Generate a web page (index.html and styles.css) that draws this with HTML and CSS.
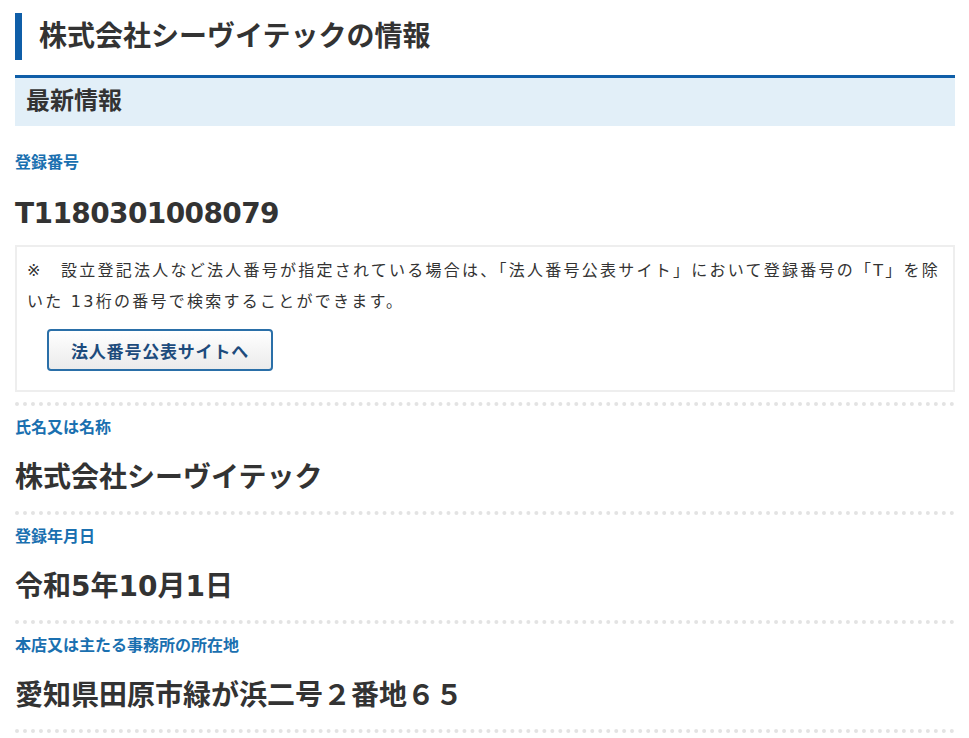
FILE: index.html
```html
<!DOCTYPE html>
<html lang="ja">
<head>
<meta charset="utf-8">
<title>株式会社シーヴイテックの情報</title>
<link rel="stylesheet" href="styles.css">
</head>
<body>
<main class="page">
  <h1 class="page-title">株式会社シーヴイテックの情報</h1>
  <section class="panel">
    <h2 class="panel-title">最新情報</h2>
    <dl class="info">
      <div class="item item-first">
        <dt class="label">登録番号</dt>
        <dd class="value value-code">T1180301008079</dd>
        <dd class="note">
          <p class="note-text">※　設立登記法人など法人番号が指定されている場合は、「法人番号公表サイト」において登録番号の「T」を除いた 13桁の番号で検索することができます。</p>
          <button class="btn" type="button">法人番号公表サイトへ</button>
        </dd>
      </div>
      <div class="item">
        <dt class="label">氏名又は名称</dt>
        <dd class="value">株式会社シーヴイテック</dd>
      </div>
      <div class="item">
        <dt class="label">登録年月日</dt>
        <dd class="value">令和5年10月1日</dd>
      </div>
      <div class="item">
        <dt class="label">本店又は主たる事務所の所在地</dt>
        <dd class="value">愛知県田原市緑が浜二号２番地６５</dd>
      </div>
    </dl>
  </section>
</main>
</body>
</html>
```
FILE: styles.css
```css
html, body {
  margin: 0;
  padding: 0;
  background: #ffffff;
}
body {
  font-family: "DejaVu Sans", "Noto Sans CJK JP", sans-serif;
  color: #333333;
}
.page {
  padding: 13px 14px 0 15px;
}
.page-title {
  margin: 0;
  border-left: 7px solid #0f5ea8;
  padding-left: 17px;
  height: 47px;
  line-height: 47px;
  font-size: 28px;
  font-weight: bold;
  color: #333333;
}
.panel {
  margin-top: 15px;
}
.panel-title {
  margin: 0;
  border-top: 3px solid #0f5ea8;
  background: #e2eff8;
  height: 48px;
  line-height: 46px;
  padding-left: 11px;
  font-size: 24px;
  font-weight: bold;
  color: #333333;
}
.info {
  margin: 0;
}
.item {
  border-bottom: 4px dotted #e3e3e3;
  padding-bottom: 13px;
}
.item + .item {
  padding-top: 10px;
}
.item-first {
  padding-top: 25px;
  padding-bottom: 10px;
}
.label {
  margin: 0;
  height: 24px;
  line-height: 24px;
  font-size: 16px;
  font-weight: bold;
  color: #1a70b0;
}
.value {
  margin: 18px 0 0 0;
  height: 40px;
  line-height: 40px;
  font-size: 28px;
  font-weight: bold;
  color: #333333;
}
.item-first .value {
  margin-top: 19px;
}
.value-code {
  letter-spacing: -0.6px;
}
.note {
  margin: 11px 0 0 0;
  border: 2px solid #eeeeee;
  padding: 8px 10px 19px 10px;
}
.note-text {
  margin: 0;
  font-size: 16px;
  line-height: 31px;
  letter-spacing: 2.25px;
  color: #333333;
}
.btn {
  display: block;
  margin: 12px 0 0 20px;
  height: 42px;
  padding: 0 22px;
  border: 2px solid #2a6fa8;
  border-radius: 4px;
  background: linear-gradient(#ffffff, #ebebeb);
  font-family: "DejaVu Sans", "Noto Sans CJK JP", sans-serif;
  font-size: 17px;
  letter-spacing: 0.8px;
  font-weight: bold;
  color: #1d4b7c;
}
```
